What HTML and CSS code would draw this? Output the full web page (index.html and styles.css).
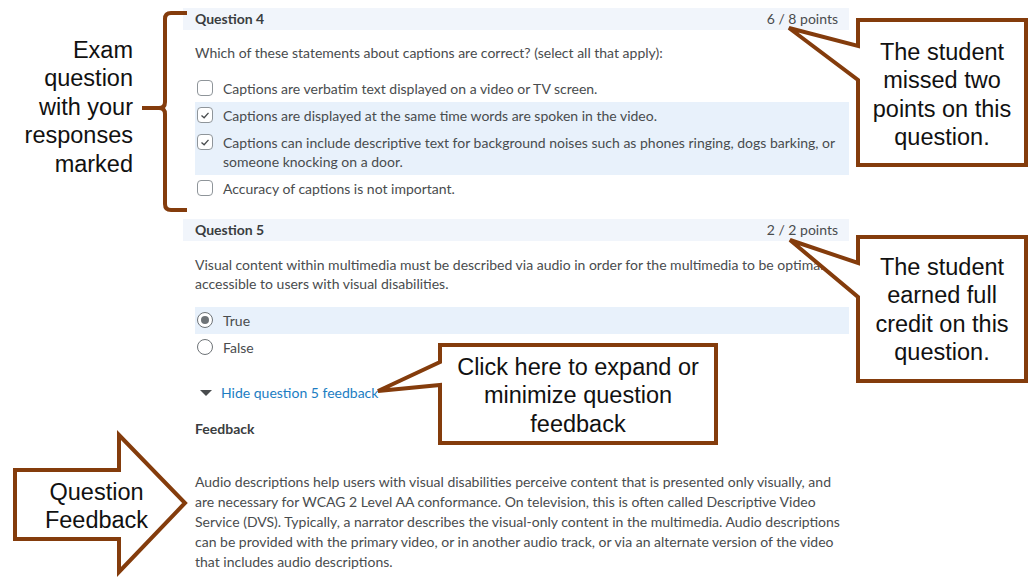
FILE: index.html
```html
<!DOCTYPE html>
<html lang="en">
<head>
    <meta charset="UTF-8">
    <meta name="viewport" content="width=device-width, initial-scale=1.0">
    <title>Quiz Review</title>
    <link rel="stylesheet" href="styles.css">
</head>
<body>
    <main class="quiz">
        <!-- Question 4 -->
        <section class="question">
            <div class="question-header">
                <span class="question-title">Question 4</span>
                <span class="question-points">6 / 8 points</span>
            </div>
            <div class="question-body">
                <p class="question-text">Which of these statements about captions are correct? (select all that apply):</p>
                <ul class="options">
                    <li class="option">
                        <span class="checkbox"></span>
                        <span class="option-text">Captions are verbatim text displayed on a video or TV screen.</span>
                    </li>
                    <li class="option selected">
                        <span class="checkbox"><svg viewBox="0 0 16 16"><polyline points="4,8.5 7,11.2 12,5.5"/></svg></span>
                        <span class="option-text">Captions are displayed at the same time words are spoken in the video.</span>
                    </li>
                    <li class="option selected">
                        <span class="checkbox"><svg viewBox="0 0 16 16"><polyline points="4,8.5 7,11.2 12,5.5"/></svg></span>
                        <span class="option-text">Captions can include descriptive text for background noises such as phones ringing, dogs barking, or someone knocking on a door.</span>
                    </li>
                    <li class="option">
                        <span class="checkbox"></span>
                        <span class="option-text">Accuracy of captions is not important.</span>
                    </li>
                </ul>
            </div>
        </section>

        <!-- Question 5 -->
        <section class="question">
            <div class="question-header">
                <span class="question-title">Question 5</span>
                <span class="question-points">2 / 2 points</span>
            </div>
            <div class="question-body">
                <p class="question-text">Visual content within multimedia must be described via audio in order for the multimedia to be optimally accessible to users with visual disabilities.</p>
                <ul class="options">
                    <li class="option selected">
                        <span class="radio checked"></span>
                        <span class="option-text">True</span>
                    </li>
                    <li class="option">
                        <span class="radio"></span>
                        <span class="option-text">False</span>
                    </li>
                </ul>
                <a class="feedback-toggle" href="#">
                    <span class="caret"></span>Hide question 5 feedback
                </a>
                <h3 class="feedback-title">Feedback</h3>
                <p class="feedback-text">Audio descriptions help users with visual disabilities perceive content that is presented only visually, and are necessary for WCAG 2 Level AA conformance. On television, this is often called Descriptive Video Service (DVS). Typically, a narrator describes the visual-only content in the multimedia. Audio descriptions can be provided with the primary video, or in another audio track, or via an alternate version of the video that includes audio descriptions.</p>
            </div>
        </section>
    </main>

    <!-- Notas por cima da página -->
    <div class="annotations">
        <svg class="shapes" width="1030" height="580" viewBox="0 0 1030 580">
            <path class="brace" d="M187,13 H171 Q165,13 165,19 V102 Q165,108 159,108 H142 M159,108 Q165,108 165,114 V204 Q165,210 171,210 H187"/>
            <path class="callout" d="M858,20 H1026 V165 H858 V80 L789,28 L858,46 Z"/>
            <path class="callout" d="M858,237 H1026 V381 H858 V297 L790,240 L858,263 Z"/>
            <path class="callout" d="M440,345 H716 V443 H440 V385 L378,391 L440,362 Z"/>
            <path class="callout" d="M15,470 H119 V435 L185,503 L119,572 V539 H15 Z"/>
        </svg>
        <div class="note note-exam">Exam<br>question<br>with your<br>responses<br>marked</div>
        <div class="note note-missed">The student<br>missed two<br>points on this<br>question.</div>
        <div class="note note-full">The student<br>earned full<br>credit on this<br>question.</div>
        <div class="note note-click">Click here to expand or<br>minimize question<br>feedback</div>
        <div class="note note-feedback">Question<br>Feedback</div>
    </div>
</body>
</html>
```

FILE: styles.css
```css
/* Geral */
body {
    margin: 0;
    background: #fff;
    font-family: Lato, "Noto Sans", sans-serif;
    font-size: 14px;
    line-height: 19px;
    color: #494c4e;
}

.quiz {
    width: 666px;
    margin-left: 183px;
    padding-top: 8px;
}

.question + .question {
    margin-top: 17px;
}

.question-header {
    display: flex;
    justify-content: space-between;
    height: 22px;
    line-height: 22px;
    padding: 0 11px 0 12px;
    background: #f1f5fb;
}

.question-title {
    font-weight: 700;
    color: #3a3d40;
}

.question-body {
    padding-left: 12px;
}

.question-text {
    margin: 13px 0 0;
}

.question:last-child .question-text {
    margin-top: 14px;
}

/* Opções */
.options {
    list-style: none;
    margin: 13px 0 0;
    padding: 0;
}

.question:last-child .options {
    margin-top: 14px;
}

.option {
    display: flex;
    align-items: flex-start;
    gap: 10px;
    padding: 4px 12px 4px 2px;
}

.option.selected {
    background: #e8f1fb;
}

.checkbox {
    flex: none;
    width: 14px;
    height: 14px;
    margin-top: 1px;
    border: 1.5px solid #8f959a;
    border-radius: 4px;
    background: #fff;
}

.checkbox svg {
    display: block;
    width: 14px;
    height: 14px;
    fill: none;
    stroke: #494c4e;
    stroke-width: 1.5;
}

.radio {
    flex: none;
    width: 14px;
    height: 14px;
    margin-top: 1px;
    border: 1.5px solid #6e7377;
    border-radius: 50%;
    background: #fff;
    display: flex;
    align-items: center;
    justify-content: center;
}

.radio.checked::after {
    content: "";
    width: 8px;
    height: 8px;
    border-radius: 50%;
    background: #6e7377;
}

/* Feedback */
.feedback-toggle {
    display: flex;
    align-items: center;
    margin-top: 22px;
    padding-left: 5px;
    color: #1c7dc3;
    text-decoration: none;
}

.caret {
    width: 0;
    height: 0;
    margin-right: 9px;
    border-left: 6.5px solid transparent;
    border-right: 6.5px solid transparent;
    border-top: 6px solid #494c4e;
}

.feedback-title {
    margin: 17px 0 0;
    font-size: 14px;
    font-weight: 700;
    color: #3a3d40;
}

.feedback-text {
    margin: 34px 0 0;
    line-height: 20px;
}

/* Anotações */
.annotations {
    position: absolute;
    top: 0;
    left: 0;
    width: 1030px;
    height: 580px;
    pointer-events: none;
}

.shapes {
    position: absolute;
    top: 0;
    left: 0;
}

.brace {
    fill: none;
    stroke: #843c0c;
    stroke-width: 4;
}

.callout {
    fill: #fff;
    stroke: #843c0c;
    stroke-width: 4;
    stroke-linejoin: miter;
}

.note {
    position: absolute;
    font-family: "Liberation Sans", Arial, sans-serif;
    font-size: 23.5px;
    line-height: 28.4px;
    color: #111;
    text-align: center;
}

.note-exam {
    left: 0;
    top: 36px;
    width: 133px;
    text-align: right;
}

.note-missed {
    left: 858px;
    top: 38px;
    width: 168px;
}

.note-full {
    left: 858px;
    top: 253px;
    width: 168px;
}

.note-click {
    left: 440px;
    top: 353px;
    width: 276px;
}

.note-feedback {
    left: 13px;
    top: 478px;
    width: 167px;
    line-height: 28px;
}
```
